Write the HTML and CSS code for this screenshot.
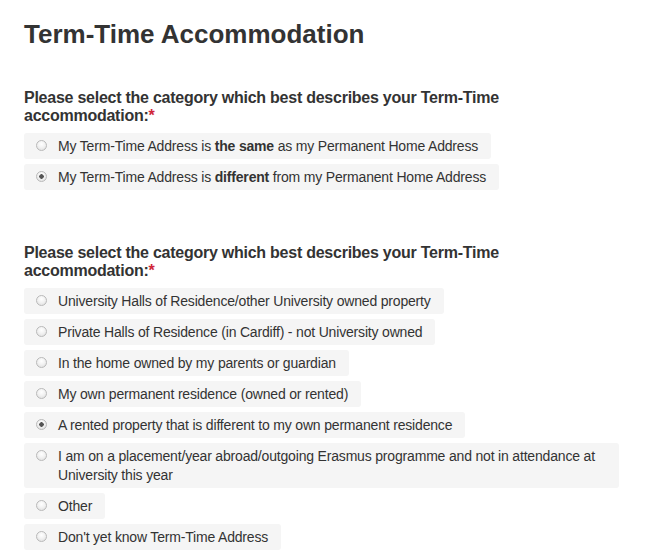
FILE: index.html
```html
<!DOCTYPE html>
<html lang="en">
<head>
<meta charset="utf-8">
<title>Term-Time Accommodation</title>
<link rel="stylesheet" href="styles.css">
</head>
<body>
<main class="page">
  <h1 class="title">Term-Time Accommodation</h1>

  <section class="question" role="radiogroup">
    <p class="question-label">Please select the category which best describes your Term-Time accommodation:<span class="req">*</span></p>
    <div class="options">
      <label class="option"><input type="radio" name="q1" class="radio"><span class="option-text">My Term-Time Address is <b>the same</b> as my Permanent Home Address</span></label>
      <label class="option"><input type="radio" name="q1" class="radio" checked><span class="option-text">My Term-Time Address is <b>different</b> from my Permanent Home Address</span></label>
    </div>
  </section>

  <section class="question" role="radiogroup">
    <p class="question-label">Please select the category which best describes your Term-Time accommodation:<span class="req">*</span></p>
    <div class="options">
      <label class="option"><input type="radio" name="q2" class="radio"><span class="option-text">University Halls of Residence/other University owned property</span></label>
      <label class="option"><input type="radio" name="q2" class="radio"><span class="option-text">Private Halls of Residence (in Cardiff) - not University owned</span></label>
      <label class="option"><input type="radio" name="q2" class="radio"><span class="option-text">In the home owned by my parents or guardian</span></label>
      <label class="option"><input type="radio" name="q2" class="radio"><span class="option-text">My own permanent residence (owned or rented)</span></label>
      <label class="option"><input type="radio" name="q2" class="radio" checked><span class="option-text">A rented property that is different to my own permanent residence</span></label>
      <label class="option"><input type="radio" name="q2" class="radio"><span class="option-text">I am on a placement/year abroad/outgoing Erasmus programme and not in attendance at University this year</span></label>
      <label class="option"><input type="radio" name="q2" class="radio"><span class="option-text">Other</span></label>
      <label class="option"><input type="radio" name="q2" class="radio"><span class="option-text">Don't yet know Term-Time Address</span></label>
    </div>
  </section>
</main>
</body>
</html>
```

FILE: styles.css
```css
html, body {
  margin: 0;
  padding: 0;
  background: #ffffff;
}

body {
  font-family: "Liberation Sans", Arial, sans-serif;
  color: #333333;
}

.page {
  padding: 18px 24px 0 24px;
}

.title {
  margin: 0;
  font-size: 26px;
  line-height: 32px;
  font-weight: bold;
  color: #333333;
}

.question {
  margin-top: 39px;
}

.question + .question {
  margin-top: 54px;
}

.question-label {
  margin: 0;
  max-width: 490px;
  font-size: 16px;
  line-height: 18px;
  letter-spacing: -0.25px;
  font-weight: bold;
  color: #333333;
}

.req {
  color: #d0263a;
}

.options {
  margin-top: 8px;
  display: flex;
  flex-direction: column;
  align-items: flex-start;
  gap: 5px;
}

.option {
  display: flex;
  align-items: flex-start;
  max-width: 595px;
  box-sizing: border-box;
  padding: 4px 13px 3px 12px;
  background: #f5f5f5;
  border-radius: 3px;
  font-size: 14px;
  line-height: 19px;
  letter-spacing: -0.18px;
  color: #333333;
}

.option b {
  font-weight: bold;
}

.radio {
  appearance: none;
  -webkit-appearance: none;
  flex: none;
  width: 11px;
  height: 11px;
  margin: 3px 11px 0 0;
  border: 1px solid #b9b9b9;
  border-radius: 50%;
  box-sizing: border-box;
  background: radial-gradient(circle at 50% 35%, #ffffff 0%, #f2f2f2 45%, #dcdcdc 100%);
}

.radio:checked {
  background:
    radial-gradient(circle, #555555 0, #555555 2px, transparent 2.5px),
    radial-gradient(circle at 50% 35%, #ffffff 0%, #f2f2f2 45%, #dcdcdc 100%);
}
```
